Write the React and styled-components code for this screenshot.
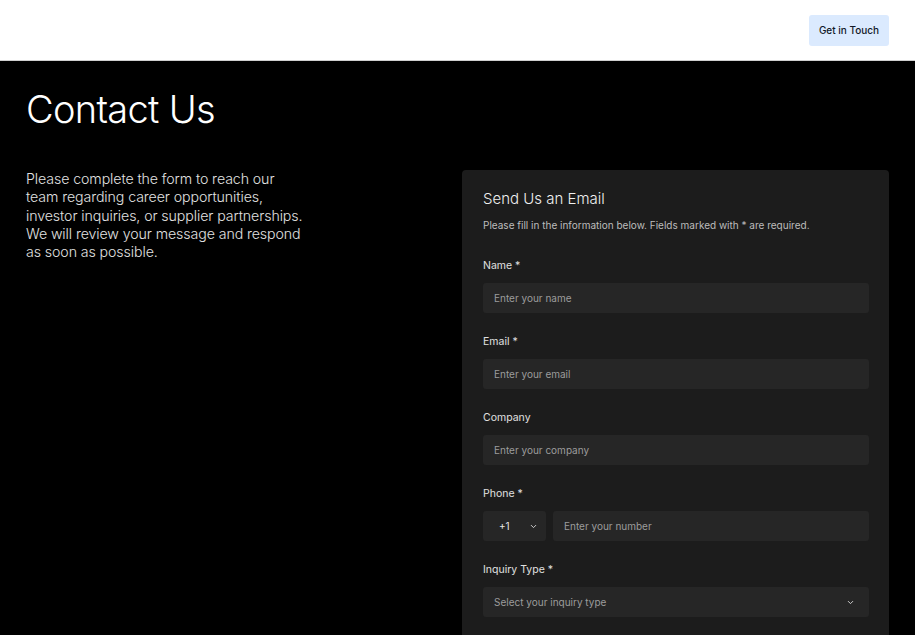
import React from "react";
import styled, { createGlobalStyle } from "styled-components";

const Global = createGlobalStyle`
  html, body { margin: 0; padding: 0; background: #000; }
  body { font-family: Inter, "Noto Sans", sans-serif; -webkit-font-smoothing: antialiased; }
  * { box-sizing: border-box; }
`;

const Page = styled.div`
  min-height: 635px;
  background: #000;
`;

const Header = styled.header`
  height: 61px;
  background: #fff;
  border-bottom: 1px solid #cfcfcf;
  display: flex;
  align-items: center;
  justify-content: flex-end;
  padding: 0 26px;
`;

const CtaButton = styled.button`
  height: 31px;
  width: 80px;
  padding: 0;
  border: none;
  border-radius: 3px;
  background: #dbeafe;
  color: #111827;
  font-family: Inter, sans-serif;
  font-size: 10px;
  font-weight: 500;
`;

const Main = styled.main`
  padding: 24px 26px 0;
`;

const Title = styled.h1`
  margin: 0;
  font-family: Inter, sans-serif;
  font-weight: 300;
  font-size: 38px;
  letter-spacing: -0.7px;
  line-height: 48px;
  color: #fff;
`;

const Columns = styled.div`
  display: grid;
  grid-template-columns: 1fr 427px;
  margin-top: 37px;
`;

const Intro = styled.p`
  margin: 0;
  max-width: 282px;
  font-family: Inter, sans-serif;
  font-weight: 300;
  font-size: 14.2px;
  letter-spacing: -0.1px;
  line-height: 18.3px;
  color: #e2e2e2;
`;

const Card = styled.section`
  background: #1c1c1c;
  border-radius: 4px;
  padding: 19px 20px 40px 21px;
`;

const CardTitle = styled.h2`
  margin: 0;
  font-family: Inter, sans-serif;
  font-weight: 300;
  font-size: 15px;
  line-height: 20px;
  color: #f0f0f0;
`;

const CardNote = styled.p`
  margin: 9px 0 0;
  font-size: 10px;
  line-height: 14px;
  color: #bdbdbd;
`;

const Fields = styled.div`
  display: flex;
  flex-direction: column;
  gap: 22px;
  margin-top: 27px;
`;

const Field = styled.div`
  display: flex;
  flex-direction: column;
  gap: 10px;
`;

const Label = styled.label`
  font-size: 10.5px;
  line-height: 14px;
  color: #e0e0e0;
`;

const Input = styled.input`
  width: 100%;
  height: 30px;
  border: none;
  border-radius: 3px;
  background: #262626;
  padding: 0 11px;
  font-family: Inter, sans-serif;
  font-size: 10px;
  color: #eee;
  outline: none;
  &::placeholder { color: #9c9c9c; }
`;

const Row = styled.div`
  display: flex;
  gap: 7px;
`;

const SelectBox = styled.div`
  height: 30px;
  width: ${(p) => p.$width || "100%"};
  flex-shrink: 0;
  border-radius: 3px;
  background: #262626;
  display: flex;
  align-items: center;
  justify-content: space-between;
  padding: ${(p) => p.$pad || "0 14px 0 11px"};
  font-size: 10px;
  color: ${(p) => (p.$muted ? "#9c9c9c" : "#e6e6e6")};
`;

const Chevron = () => (
  <svg width="9" height="9" viewBox="0 0 24 24" fill="none" stroke="#d0d0d0" strokeWidth="2.6" strokeLinecap="round" strokeLinejoin="round">
    <path d="m6 9 6 6 6-6" />
  </svg>
);

export default function App() {
  return (
    <Page>
      <Global />
      <Header>
        <CtaButton>Get in Touch</CtaButton>
      </Header>
      <Main>
        <Title>Contact Us</Title>
        <Columns>
          <Intro>
            Please complete the form to reach our team regarding career opportunities,
            investor inquiries, or supplier partnerships. We will review your message and
            respond as soon as possible.
          </Intro>
          <Card>
            <CardTitle>Send Us an Email</CardTitle>
            <CardNote>Please fill in the information below. Fields marked with * are required.</CardNote>
            <Fields>
              <Field>
                <Label>Name *</Label>
                <Input placeholder="Enter your name" />
              </Field>
              <Field>
                <Label>Email *</Label>
                <Input placeholder="Enter your email" />
              </Field>
              <Field>
                <Label>Company</Label>
                <Input placeholder="Enter your company" />
              </Field>
              <Field>
                <Label>Phone *</Label>
                <Row>
                  <SelectBox $width="63px" $pad="0 8px 0 16px">
                    <span>+1</span>
                    <Chevron />
                  </SelectBox>
                  <Input placeholder="Enter your number" />
                </Row>
              </Field>
              <Field>
                <Label>Inquiry Type *</Label>
                <SelectBox $muted>
                  <span>Select your inquiry type</span>
                  <Chevron />
                </SelectBox>
              </Field>
            </Fields>
          </Card>
        </Columns>
      </Main>
    </Page>
  );
}
